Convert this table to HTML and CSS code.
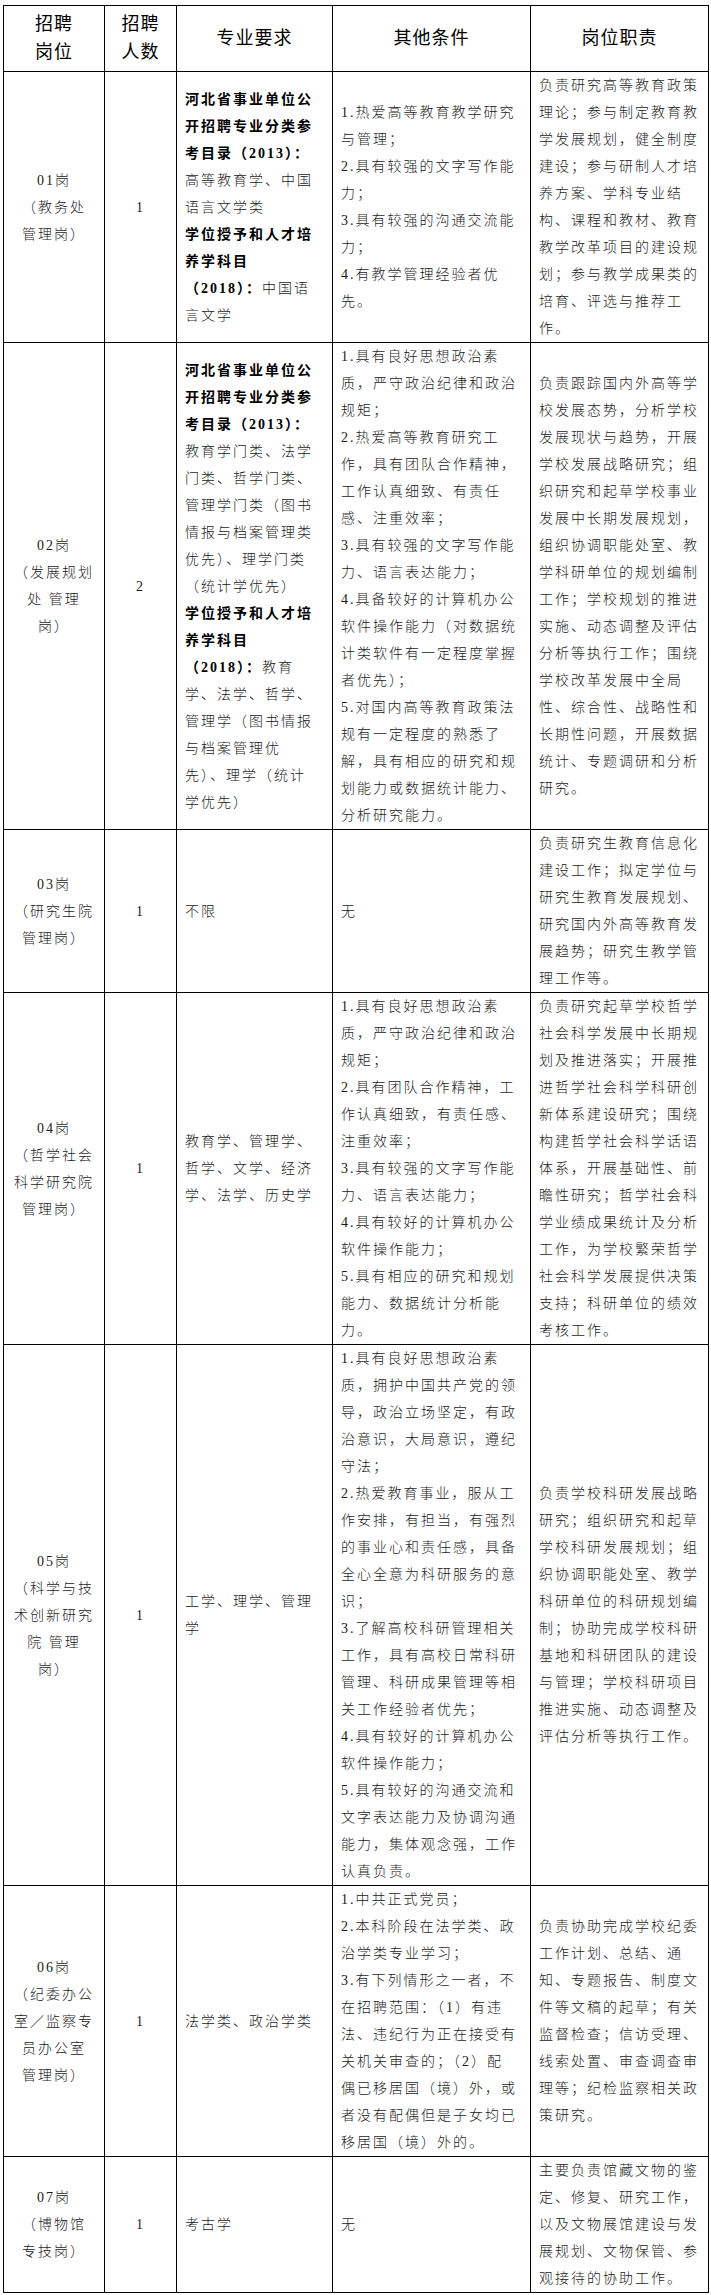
FILE: index.html
```html
<!DOCTYPE html>
<html lang="zh-CN">
<head>
<meta charset="utf-8">
<title>招聘岗位表</title>
<link rel="stylesheet" href="styles.css">
</head>
<body>
<table class="jobs">
  <colgroup>
    <col class="c1"><col class="c2"><col class="c3"><col class="c4"><col class="c5">
  </colgroup>
  <thead>
    <tr>
      <th>招聘<br>岗位</th>
      <th>招聘<br>人数</th>
      <th>专业要求</th>
      <th>其他条件</th>
      <th>岗位职责</th>
    </tr>
  </thead>
  <tbody>
    <tr>
      <td class="ctr">01岗<br>（教务处<br>管理岗）</td>
      <td class="ctr">1</td>
      <td><b>河北省事业单位公<br>开招聘专业分类参<br>考目录（2013）：</b><br>高等教育学、中国<br>语言文学类<br><b>学位授予和人才培<br>养学科目<br>（2018）：</b>中国语<br>言文学</td>
      <td>1.热爱高等教育教学研究<br>与管理；<br>2.具有较强的文字写作能<br>力；<br>3.具有较强的沟通交流能<br>力；<br>4.有教学管理经验者优<br>先。</td>
      <td>负责研究高等教育政策<br>理论；参与制定教育教<br>学发展规划，健全制度<br>建设；参与研制人才培<br>养方案、学科专业结<br>构、课程和教材、教育<br>教学改革项目的建设规<br>划；参与教学成果类的<br>培育、评选与推荐工<br>作。</td>
    </tr>
    <tr>
      <td class="ctr">02岗<br>（发展规划<br>处 管理<br>岗）</td>
      <td class="ctr">2</td>
      <td><b>河北省事业单位公<br>开招聘专业分类参<br>考目录（2013）：</b><br>教育学门类、法学<br>门类、哲学门类、<br>管理学门类（图书<br>情报与档案管理类<br>优先）、理学门类<br>（统计学优先）<br><b>学位授予和人才培<br>养学科目<br>（2018）：</b>教育<br>学、法学、哲学、<br>管理学（图书情报<br>与档案管理优<br>先）、理学（统计<br>学优先）</td>
      <td>1.具有良好思想政治素<br>质，严守政治纪律和政治<br>规矩；<br>2.热爱高等教育研究工<br>作，具有团队合作精神，<br>工作认真细致、有责任<br>感、注重效率；<br>3.具有较强的文字写作能<br>力、语言表达能力；<br>4.具备较好的计算机办公<br>软件操作能力（对数据统<br>计类软件有一定程度掌握<br>者优先）；<br>5.对国内高等教育政策法<br>规有一定程度的熟悉了<br>解，具有相应的研究和规<br>划能力或数据统计能力、<br>分析研究能力。</td>
      <td>负责跟踪国内外高等学<br>校发展态势，分析学校<br>发展现状与趋势，开展<br>学校发展战略研究；组<br>织研究和起草学校事业<br>发展中长期发展规划，<br>组织协调职能处室、教<br>学科研单位的规划编制<br>工作；学校规划的推进<br>实施、动态调整及评估<br>分析等执行工作；围绕<br>学校改革发展中全局<br>性、综合性、战略性和<br>长期性问题，开展数据<br>统计、专题调研和分析<br>研究。</td>
    </tr>
    <tr>
      <td class="ctr">03岗<br>（研究生院<br>管理岗）</td>
      <td class="ctr">1</td>
      <td>不限</td>
      <td>无</td>
      <td>负责研究生教育信息化<br>建设工作；拟定学位与<br>研究生教育发展规划、<br>研究国内外高等教育发<br>展趋势；研究生教学管<br>理工作等。</td>
    </tr>
    <tr>
      <td class="ctr">04岗<br>（哲学社会<br>科学研究院<br>管理岗）</td>
      <td class="ctr">1</td>
      <td>教育学、管理学、<br>哲学、文学、经济<br>学、法学、历史学</td>
      <td>1.具有良好思想政治素<br>质，严守政治纪律和政治<br>规矩；<br>2.具有团队合作精神，工<br>作认真细致，有责任感、<br>注重效率；<br>3.具有较强的文字写作能<br>力、语言表达能力；<br>4.具有较好的计算机办公<br>软件操作能力；<br>5.具有相应的研究和规划<br>能力、数据统计分析能<br>力。</td>
      <td>负责研究起草学校哲学<br>社会科学发展中长期规<br>划及推进落实；开展推<br>进哲学社会科学科研创<br>新体系建设研究；围绕<br>构建哲学社会科学话语<br>体系，开展基础性、前<br>瞻性研究；哲学社会科<br>学业绩成果统计及分析<br>工作，为学校繁荣哲学<br>社会科学发展提供决策<br>支持；科研单位的绩效<br>考核工作。</td>
    </tr>
    <tr>
      <td class="ctr">05岗<br>（科学与技<br>术创新研究<br>院 管理<br>岗）</td>
      <td class="ctr">1</td>
      <td>工学、理学、管理<br>学</td>
      <td>1.具有良好思想政治素<br>质，拥护中国共产党的领<br>导，政治立场坚定，有政<br>治意识，大局意识，遵纪<br>守法；<br>2.热爱教育事业，服从工<br>作安排，有担当，有强烈<br>的事业心和责任感，具备<br>全心全意为科研服务的意<br>识；<br>3.了解高校科研管理相关<br>工作，具有高校日常科研<br>管理、科研成果管理等相<br>关工作经验者优先；<br>4.具有较好的计算机办公<br>软件操作能力；<br>5.具有较好的沟通交流和<br>文字表达能力及协调沟通<br>能力，集体观念强，工作<br>认真负责。</td>
      <td>负责学校科研发展战略<br>研究；组织研究和起草<br>学校科研发展规划；组<br>织协调职能处室、教学<br>科研单位的科研规划编<br>制；协助完成学校科研<br>基地和科研团队的建设<br>与管理；学校科研项目<br>推进实施、动态调整及<br>评估分析等执行工作。</td>
    </tr>
    <tr>
      <td class="ctr">06岗<br>（纪委办公<br>室／监察专<br>员办公室<br>管理岗）</td>
      <td class="ctr">1</td>
      <td>法学类、政治学类</td>
      <td>1.中共正式党员；<br>2.本科阶段在法学类、政<br>治学类专业学习；<br>3.有下列情形之一者，不<br>在招聘范围：（1）有违<br>法、违纪行为正在接受有<br>关机关审查的；（2）配<br>偶已移居国（境）外，或<br>者没有配偶但是子女均已<br>移居国（境）外的。</td>
      <td>负责协助完成学校纪委<br>工作计划、总结、通<br>知、专题报告、制度文<br>件等文稿的起草；有关<br>监督检查；信访受理、<br>线索处置、审查调查审<br>理等；纪检监察相关政<br>策研究。</td>
    </tr>
    <tr>
      <td class="ctr">07岗<br>（博物馆<br>专技岗）</td>
      <td class="ctr">1</td>
      <td>考古学</td>
      <td>无</td>
      <td>主要负责馆藏文物的鉴<br>定、修复、研究工作，<br>以及文物展馆建设与发<br>展规划、文物保管、参<br>观接待的协助工作。</td>
    </tr>
  </tbody>
</table>
</body>
</html>
```

FILE: styles.css
```css
html, body {
  background: #ffffff;
}

body {
  margin: 5px 0 0 3px;
}

.jobs {
  border-collapse: collapse;
  table-layout: fixed;
  width: 705px;
  font-family: "Liberation Serif", "Noto Sans CJK SC", serif;
  font-size: 14px;
  line-height: 27px;
  letter-spacing: 2px;
  font-weight: 300;
  color: #1a1a1a;
}

.c1 { width: 101px; }
.c2 { width: 72px; }
.c3 { width: 156px; }
.c4 { width: 198px; }
.c5 { width: 178px; }

.jobs th,
.jobs td {
  border: 1px solid #000000;
  vertical-align: middle;
  white-space: nowrap;
  overflow: hidden;
}

.jobs th {
  font-size: 18px;
  line-height: 28px;
  letter-spacing: 1px;
  font-weight: 400;
  color: #000000;
  text-align: center;
  padding: 4px 0 5px;
}

.jobs td {
  padding: 0 0 0 8px;
  text-align: left;
}

.jobs td.ctr {
  text-align: center;
  padding: 0;
}

.jobs b {
  font-weight: 700;
  color: #000000;
}
```
